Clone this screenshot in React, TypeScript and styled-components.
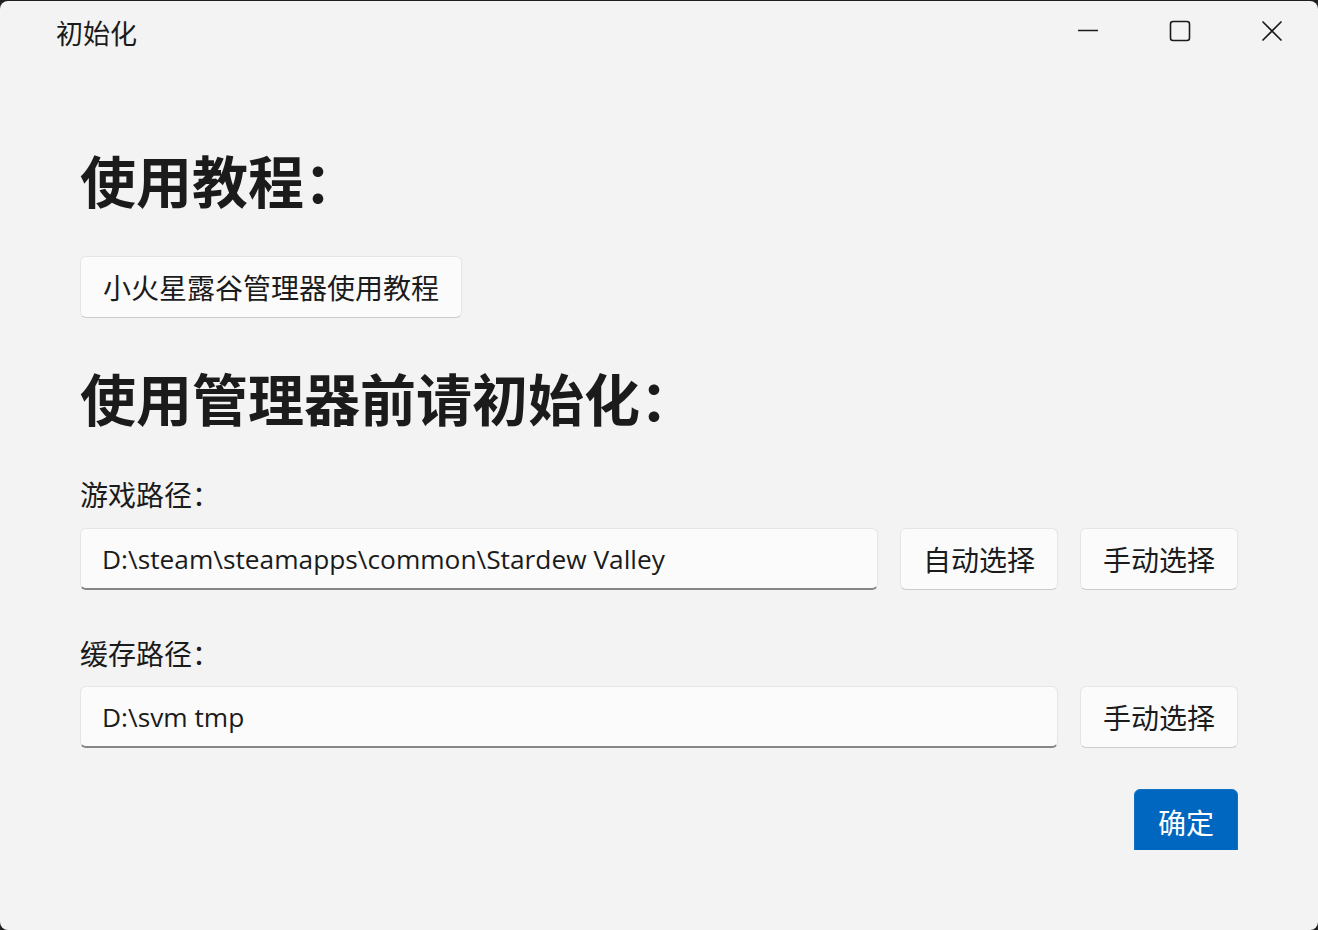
import React from "react";
import styled, { createGlobalStyle } from "styled-components";

const GlobalStyle = createGlobalStyle`
  html, body {
    margin: 0;
    padding: 0;
    background: #1f1f1f;
  }
  * { box-sizing: border-box; }
`;

const FONT = `"Segoe UI", "Open Sans", "Noto Sans CJK SC", sans-serif`;
const CJK = `"Noto Sans CJK SC", sans-serif`;

const Window = styled.div`
  margin-top: 1px;
  width: 1318px;
  height: 929px;
  background: #f3f3f3;
  border-radius: 8px;
  overflow: hidden;
  display: flex;
  flex-direction: column;
  font-family: ${CJK};
  color: #1b1b1b;
`;

const TitleBar = styled.div`
  height: 69px;
  display: flex;
  align-items: flex-start;
  flex-shrink: 0;
`;

const Title = styled.div`
  flex: 1;
  height: 63px;
  padding-left: 56px;
  display: flex;
  align-items: center;
  font-size: 27px;
  line-height: 27px;
  color: #1b1b1b;
`;

const CaptionButton = styled.div`
  width: 92px;
  height: 60px;
  display: flex;
  align-items: center;
  justify-content: center;
  color: #1b1b1b;
`;

/* scroll region: clips whatever runs past the bottom */
const Content = styled.div`
  height: 780px;
  overflow: hidden;
  padding: 81px 80px 0 80px;
  display: flex;
  flex-direction: column;
  align-items: flex-start;
`;

const Heading = styled.h1<{ $gap: number }>`
  margin: ${(p) => p.$gap}px 0 0 0;
  font-family: ${CJK};
  font-weight: 700;
  font-size: 56px;
  line-height: 56px;
  color: #1b1b1b;
`;

const Label = styled.div<{ $gap: number }>`
  margin-top: ${(p) => p.$gap}px;
  font-size: 28px;
  line-height: 28px;
  color: #1b1b1b;
`;

const Button = styled.button<{ $gap?: number; $width?: number }>`
  margin-top: ${(p) => p.$gap ?? 0}px;
  height: 62px;
  ${(p) => (p.$width ? `width: ${p.$width}px;` : "padding: 0 22px;")}
  flex-shrink: 0;
  background: #fbfbfb;
  border: 1px solid #e5e5e5;
  border-bottom-color: #cccccc;
  border-radius: 6px;
  font-family: ${CJK};
  font-size: 28px;
  line-height: 28px;
  color: #1b1b1b;
  display: flex;
  align-items: center;
  justify-content: center;
`;

const AccentButton = styled.button`
  margin-top: 41px;
  align-self: flex-end;
  height: 66px;
  width: 104px;
  flex-shrink: 0;
  background: #0067c0;
  border: 1px solid #1473c5;
  border-radius: 6px;
  font-family: ${CJK};
  font-size: 28px;
  line-height: 28px;
  color: #ffffff;
  display: flex;
  align-items: center;
  justify-content: center;
`;

const Row = styled.div<{ $gap: number }>`
  margin-top: ${(p) => p.$gap}px;
  align-self: stretch;
  display: flex;
  gap: 22px;
`;

const PathField = styled.div`
  flex: 1;
  height: 62px;
  background: #fbfbfb;
  border: 1px solid #e5e5e5;
  border-bottom: 2px solid #868686;
  border-radius: 6px;
  padding-left: 21px;
  display: flex;
  align-items: center;
  font-family: ${FONT};
  font-size: 26.3px;
  color: #1b1b1b;
  white-space: nowrap;
`;

const Icon = styled.svg`
  display: block;
`;

export default function App() {
  return (
    <>
      <GlobalStyle />
      <Window>
        <TitleBar>
          <Title>初始化</Title>
          <CaptionButton>
            <Icon width="22" height="22" viewBox="0 0 22 22">
              <line x1="1" y1="10.5" x2="21" y2="10.5" stroke="#1b1b1b" strokeWidth="1.4" />
            </Icon>
          </CaptionButton>
          <CaptionButton>
            <Icon width="22" height="22" viewBox="0 0 22 22">
              <rect x="1.5" y="1.5" width="19" height="19" rx="2.5" fill="none" stroke="#1b1b1b" strokeWidth="1.6" />
            </Icon>
          </CaptionButton>
          <CaptionButton>
            <Icon width="22" height="22" viewBox="0 0 22 22">
              <path d="M1.5 1.5 L20.5 20.5 M20.5 1.5 L1.5 20.5" stroke="#1b1b1b" strokeWidth="1.6" />
            </Icon>
          </CaptionButton>
        </TitleBar>
        <Content>
          <Heading $gap={0}>使用教程：</Heading>
          <Button $gap={49}>小火星露谷管理器使用教程</Button>
          <Heading $gap={51}>使用管理器前请初始化：</Heading>
          <Label $gap={55}>游戏路径：</Label>
          <Row $gap={20}>
            <PathField>D:\steam\steamapps\common\Stardew Valley</PathField>
            <Button $width={158}>自动选择</Button>
            <Button $width={158}>手动选择</Button>
          </Row>
          <Label $gap={49}>缓存路径：</Label>
          <Row $gap={19}>
            <PathField>D:\svm tmp</PathField>
            <Button $width={158}>手动选择</Button>
          </Row>
          <AccentButton>确定</AccentButton>
        </Content>
      </Window>
    </>
  );
}
